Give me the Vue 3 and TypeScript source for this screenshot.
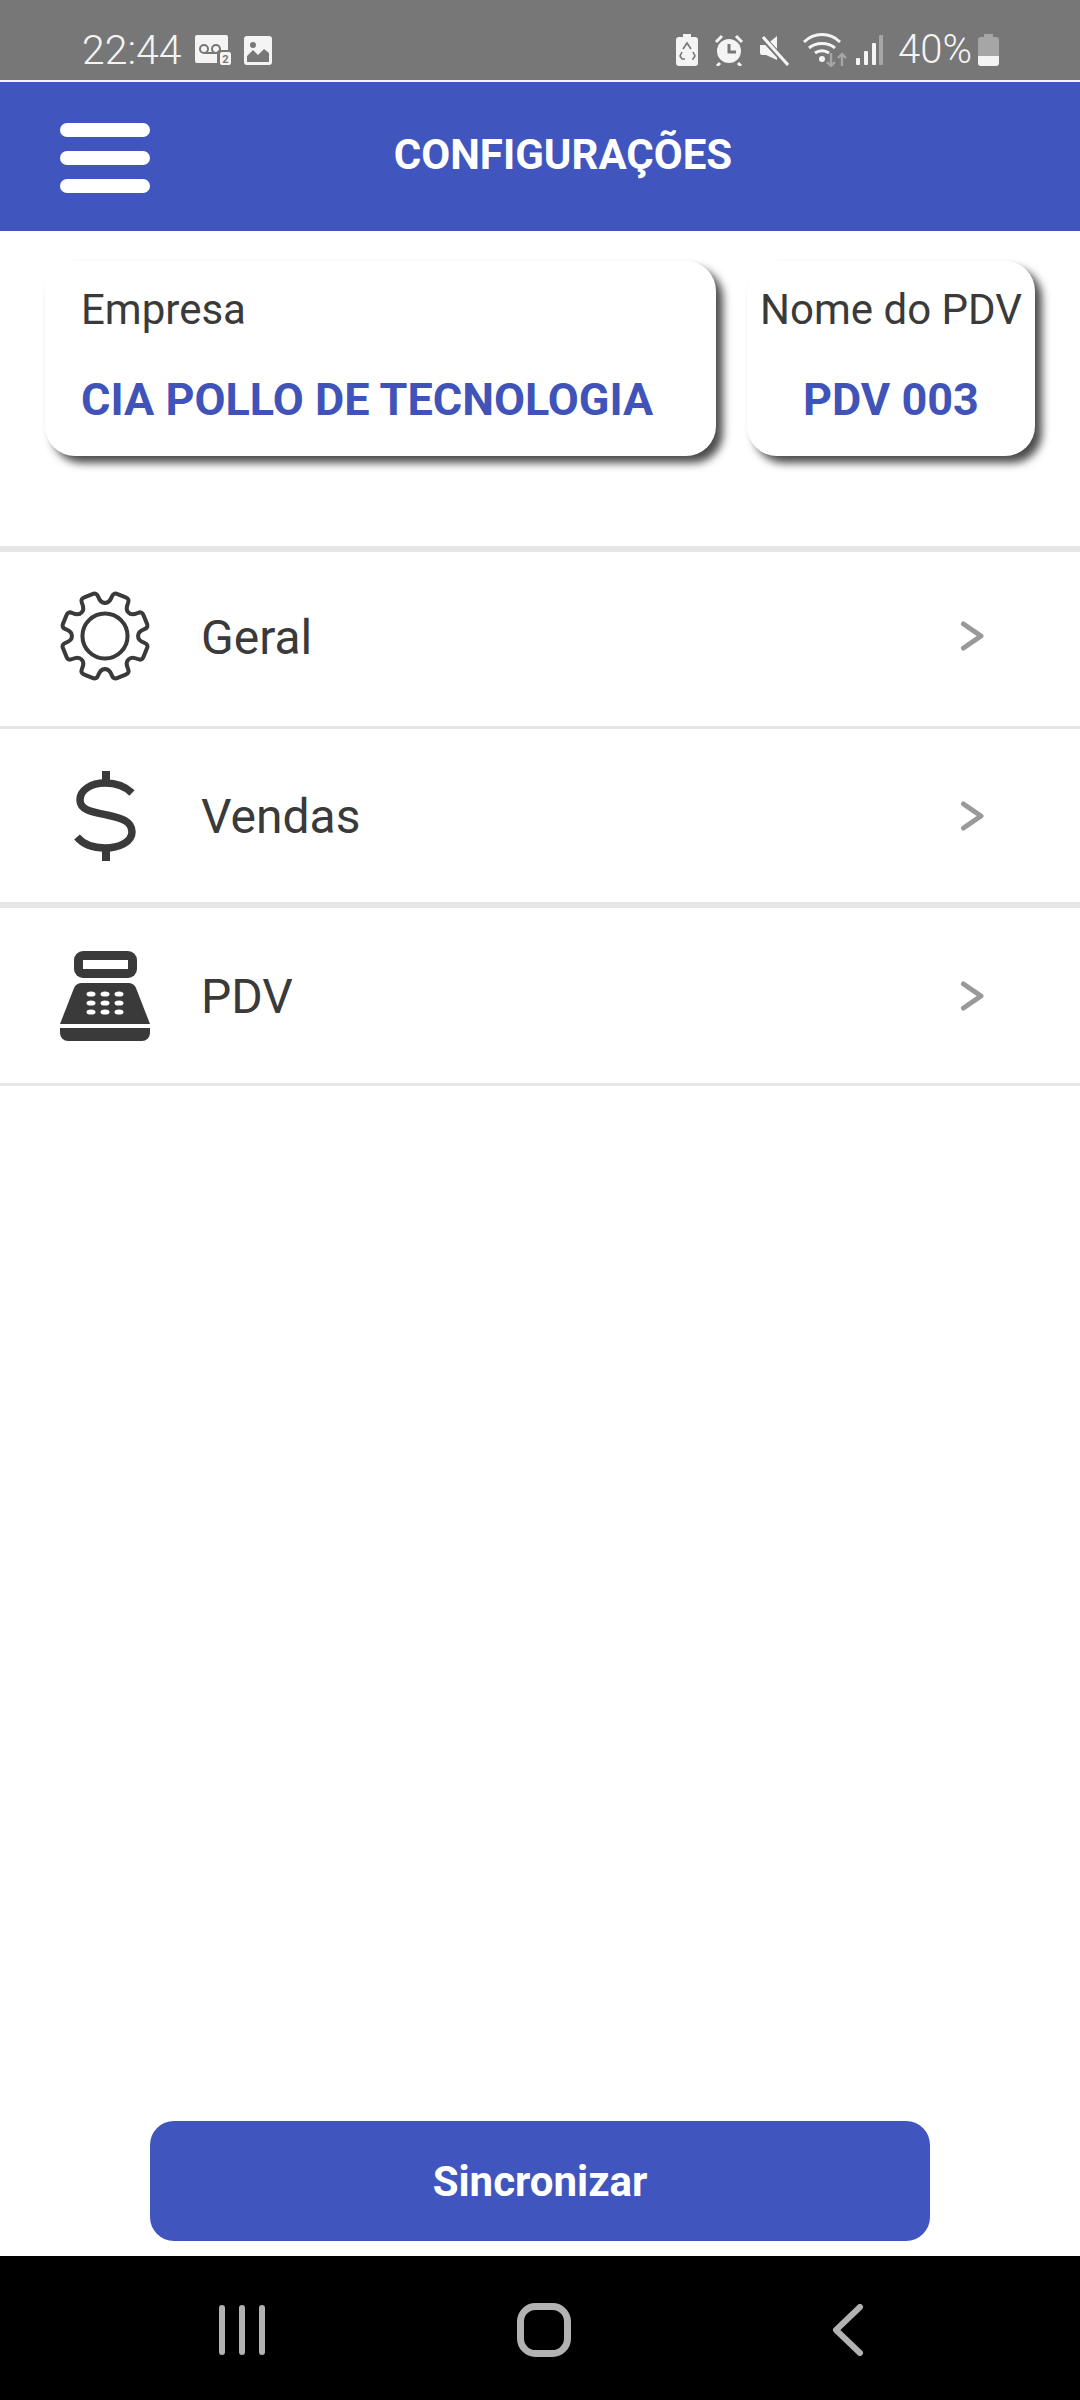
<script setup lang="ts">
const rows = [
  { label: 'Geral', icon: 'gear', h: 'row-a' },
  { label: 'Vendas', icon: 'dollar', h: 'row-b' },
  { label: 'PDV', icon: 'pdv', h: 'row-c' }
]
const gearPath = (() => {
  const teeth = 8
  const cx = 50, cy = 50, ro = 47.5, rv = 36
  const pt = (r: number, t: number) =>
    (cx + r * Math.cos(t)).toFixed(1) + ' ' + (cy + r * Math.sin(t)).toFixed(1)
  let d = ''
  for (let i = 0; i < teeth; i++) {
    const a = (i * Math.PI * 2) / teeth - Math.PI / 2 + Math.PI / 8
    const step = Math.PI / 8
    d += (i === 0 ? 'M' : 'L') + pt(rv, a - step) + ' '
    d += 'Q' + pt(rv, a - 0.26) + ' ' + pt(ro - 4, a - 0.22) + ' '
    d += 'Q' + pt(ro + 1, a - 0.2) + ' ' + pt(ro, a - 0.1) + ' '
    d += 'L' + pt(ro, a + 0.1) + ' '
    d += 'Q' + pt(ro + 1, a + 0.2) + ' ' + pt(ro - 4, a + 0.22) + ' '
    d += 'Q' + pt(rv, a + 0.26) + ' ' + pt(rv, a + step) + ' '
  }
  return d + 'Z'
})()
const keys = [[31,43],[45,43],[59,43],[31,52],[45,52],[59,52],[31,61],[45,61],[59,61]]
</script>

<template>
  <div class="screen">
    <div class="status">
      <div class="st-left">
        <span class="time">22:44</span>
        <svg class="ic" width="38" height="32" viewBox="0 0 38 32">
          <path d="M3 1h29a2 2 0 0 1 2 2v13h-8a3 3 0 0 0-3 3v10H3a2 2 0 0 1-2-2V3a2 2 0 0 1 2-2z" fill="#f4f4f4"/>
          <circle cx="10" cy="15" r="4" fill="none" stroke="#777" stroke-width="2"/>
          <circle cx="22" cy="15" r="4" fill="none" stroke="#777" stroke-width="2"/>
          <path d="M10 19h12" stroke="#777" stroke-width="2"/>
          <rect x="26" y="18" width="11" height="13" rx="2" fill="#f4f4f4"/>
          <text x="31.5" y="29" class="mini">2</text>
        </svg>
        <svg class="ic pic" width="28" height="29" viewBox="0 0 28 29">
          <rect width="28" height="29" rx="3" fill="#f4f4f4"/>
          <circle cx="9" cy="9" r="3" fill="#777"/>
          <path d="M3 26v-6l6-6 5 5 6-6 5 4v9z" fill="#777"/>
        </svg>
      </div>
      <div class="st-right">
        <svg width="22" height="32" viewBox="0 0 22 32">
          <path d="M7 0h8v3h4a3 3 0 0 1 3 3v23a3 3 0 0 1-3 3H3a3 3 0 0 1-3-3V6a3 3 0 0 1 3-3h4z" fill="#f4f4f4"/>
          <path d="M7 15l4-6 4 6M6 18l-2 4 2 3h3M16 25h1l2-3-2-4" fill="none" stroke="#777" stroke-width="1.6"/>
        </svg>
        <svg class="gap-a" width="30" height="32" viewBox="0 0 30 32">
          <circle cx="15" cy="17" r="12" fill="#f4f4f4"/>
          <path d="M15 10v8h7" fill="none" stroke="#777" stroke-width="3"/>
          <path d="M2 8l6-6M28 8l-6-6M6 29l-3 3M24 29l3 3" stroke="#f4f4f4" stroke-width="3"/>
        </svg>
        <svg class="gap-b" width="30" height="32" viewBox="0 0 30 32">
          <path d="M1 11h6L18 2v24L7 21H3a2 2 0 0 1-2-2z" fill="#f4f4f4"/>
          <path d="M2 2l27 29" stroke="#777" stroke-width="6"/>
          <path d="M4 3l25 28" stroke="#f4f4f4" stroke-width="3"/>
        </svg>
        <svg class="gap-d" width="44" height="34" viewBox="0 0 44 34">
          <path d="M1 9c10-10 26-10 36 0M6 15c7-6 19-6 26 0M12 20c4-3 10-3 14 0" fill="none" stroke="#f4f4f4" stroke-width="3"/>
          <circle cx="19" cy="26" r="3" fill="#f4f4f4"/>
          <path d="M28 20v13M24 29l4 4 4-4" fill="none" stroke="#a6a6a6" stroke-width="2.4"/>
          <path d="M39 33V21M35 25l4-4 4 4" fill="none" stroke="#a6a6a6" stroke-width="2.4"/>
        </svg>
        <svg class="gap-c" width="27" height="30" viewBox="0 0 27 30">
          <rect x="0" y="23" width="4" height="7" rx="1" fill="#f4f4f4"/>
          <rect x="8" y="16" width="4" height="14" rx="1" fill="#f4f4f4"/>
          <rect x="16" y="8" width="4" height="22" rx="1" fill="#f4f4f4"/>
          <rect x="23" y="0" width="4" height="30" rx="1" fill="#a6a6a6"/>
        </svg>
        <span class="pct">40%</span>
        <svg class="bat" width="21" height="32" viewBox="0 0 21 32">
          <path d="M6 0h9v3h3a3 3 0 0 1 3 3v16H0V6a3 3 0 0 1 3-3h3z" fill="#a6a6a6"/>
          <path d="M0 22h21v7a3 3 0 0 1-3 3H3a3 3 0 0 1-3-3z" fill="#f4f4f4"/>
        </svg>
      </div>
    </div>

    <header class="bar">
      <div class="burger"><i></i><i></i><i></i></div>
      <h1>CONFIGURAÇÕES</h1>
    </header>

    <section class="cards">
      <div class="card c1">
        <div class="lbl">Empresa</div>
        <div class="val">CIA POLLO DE TECNOLOGIA</div>
      </div>
      <div class="card c2">
        <div class="lbl">Nome do PDV</div>
        <div class="val">PDV 003</div>
      </div>
    </section>

    <ul class="list">
      <li v-for="r in rows" :key="r.label" class="row" :class="r.h">
        <span class="icon">
          <svg v-if="r.icon === 'gear'" width="92" height="92" viewBox="0 0 100 100">
            <path :d="gearPath" fill="none" stroke="#3a3a3a" stroke-width="4.4" stroke-linejoin="round"/>
            <circle cx="50" cy="50" r="24.5" fill="none" stroke="#3a3a3a" stroke-width="4.4"/>
          </svg>
          <svg v-else-if="r.icon === 'dollar'" width="92" height="92" viewBox="0 0 92 92">
            <path d="M47 1v12M47 78v13" stroke="#3a3a3a" stroke-width="8"/>
            <path d="M73 23C66 16 56 13 46 13 32 13 21 20 21 30 21 40 33 42 48 45 62 48 73 51 73 62 73 72 60 78 46 78 34 78 24 74 18 67" fill="none" stroke="#3a3a3a" stroke-width="7.5"/>
          </svg>
          <svg v-else width="90" height="90" viewBox="0 0 90 90">
            <rect x="14" y="0" width="63" height="27" rx="9" fill="#3a3a3a"/>
            <rect x="23" y="9" width="45" height="9" fill="#fff"/>
            <path d="M21 32h48a8 8 0 0 1 7 5l14 36H0l14-36a8 8 0 0 1 7-5z" fill="#3a3a3a"/>
            <g fill="#fff">
              <ellipse v-for="p in keys" :key="p.join()" :cx="p[0]" :cy="p[1]" rx="4.5" ry="2.6"/>
            </g>
            <path d="M0 77h90v5a8 8 0 0 1-8 8H8a8 8 0 0 1-8-8z" fill="#3a3a3a"/>
          </svg>
        </span>
        <span class="text">{{ r.label }}</span>
        <svg class="chev" width="30" height="34" viewBox="0 0 30 34">
          <path d="M5.5 5L23 17 5.5 29" fill="none" stroke="#999" stroke-width="5" stroke-linecap="round" stroke-linejoin="round"/>
        </svg>
      </li>
    </ul>

    <div class="spacer"></div>

    <div class="action"><button type="button">Sincronizar</button></div>

    <nav class="nav">
      <svg width="46" height="50" viewBox="0 0 46 50">
        <path d="M3 3v44M23 3v44M43 3v44" stroke="#b2b2b2" stroke-width="6" stroke-linecap="round"/>
      </svg>
      <svg class="home" width="54" height="54" viewBox="0 0 54 54">
        <rect x="3.5" y="3.5" width="47" height="47" rx="15" fill="none" stroke="#b2b2b2" stroke-width="7"/>
      </svg>
      <svg class="back" width="32" height="52" viewBox="0 0 32 52">
        <path d="M28 3L4 26l24 23" fill="none" stroke="#b2b2b2" stroke-width="6" stroke-linecap="round" stroke-linejoin="round"/>
      </svg>
    </nav>
  </div>
</template>

<style>
html, body { margin: 0; background: #fff; }
</style>

<style scoped>
.screen {
  width: 1080px;
  height: 2400px;
  display: flex;
  flex-direction: column;
  overflow: hidden;
  background: #fff;
  font-family: Roboto, "Liberation Sans", sans-serif;
  color: #3a3a3a;
}
.status {
  height: 82px;
  box-sizing: border-box;
  background: #777;
  border-bottom: 2px solid #f4f4f4;
  padding: 33px 81px 0 82px;
  display: flex;
  justify-content: space-between;
  align-items: flex-start;
  color: #f4f4f4;
  flex: none;
}
.st-left, .st-right { display: flex; align-items: center; height: 34px; }
.time { font-size: 41px; font-weight: 300; line-height: 34px; }
.ic { margin-left: 12px; }
.pic { margin-left: 12px; }
.mini { font: 700 11px Roboto, sans-serif; fill: #777; text-anchor: middle; }
.gap-a { margin-left: 16px; }
.gap-b { margin-left: 15px; }
.gap-d { margin-left: 14px; }
.gap-c { margin-left: 9px; }
.pct { font-size: 40px; font-weight: 300; margin-left: 15px; line-height: 34px; }
.bat { margin-left: 6px; }
.bar {
  height: 149px;
  background: #4056be;
  display: flex;
  align-items: center;
  position: relative;
  padding-left: 60px;
  flex: none;
}
.burger { width: 90px; display: flex; flex-direction: column; gap: 14px; margin-top: 2px; }
.burger i { display: block; height: 14px; border-radius: 7px; background: #fff; }
h1 {
  margin: -3px 0 0;
  position: absolute;
  left: 0;
  right: 0;
  padding-left: 46px;
  text-align: center;
  color: #fff;
  font-size: 42px;
  font-weight: 700;
  line-height: 48px;
}
.cards {
  display: flex;
  gap: 31px;
  padding: 30px 0 0 45px;
  height: 315px;
  box-sizing: border-box;
  flex: none;
}
.card {
  height: 195px;
  box-sizing: border-box;
  background: #fff;
  border-radius: 30px;
  box-shadow: 7px 7px 8px rgba(0, 0, 0, 0.7);
}
.c1 { width: 671px; padding-left: 36px; }
.c2 { width: 288px; text-align: center; }
.lbl { font-size: 42px; line-height: 48px; margin-top: 25px; white-space: nowrap; }
.val { font-size: 45px; font-weight: 700; color: #3f53b8; line-height: 52px; margin-top: 40px; white-space: nowrap; }
.list { list-style: none; margin: 0; padding: 0; border-top: 6px solid #e6e6e6; flex: none; }
.row {
  display: flex;
  align-items: center;
  padding-left: 59px;
  box-sizing: border-box;
  position: relative;
  border-bottom: 3px solid #e6e6e6;
}
.row-a { height: 177px; padding-bottom: 6px; }
.row-b { height: 179px; border-bottom-width: 6px; }
.row-c { height: 178px; }
.icon { width: 92px; display: flex; justify-content: center; }
.text { font-size: 48px; margin-left: 50px; padding-top: 2px; }
.chev { position: absolute; left: 958px; top: 50%; margin-top: -17px; }
.row-a .chev { margin-top: -20px; }
.spacer { flex: 1; }
.action { display: flex; justify-content: center; padding-bottom: 15px; }
button {
  width: 780px;
  height: 120px;
  border: 0;
  border-radius: 24px;
  background: #4056be;
  color: #fff;
  font-family: inherit;
  font-size: 42px;
  font-weight: 700;
}
.nav {
  height: 144px;
  background: #000;
  display: flex;
  align-items: center;
  padding: 4px 0 0 219px;
  box-sizing: border-box;
  flex: none;
}
.home { margin-left: 252px; }
.back { margin-left: 261px; }
</style>
